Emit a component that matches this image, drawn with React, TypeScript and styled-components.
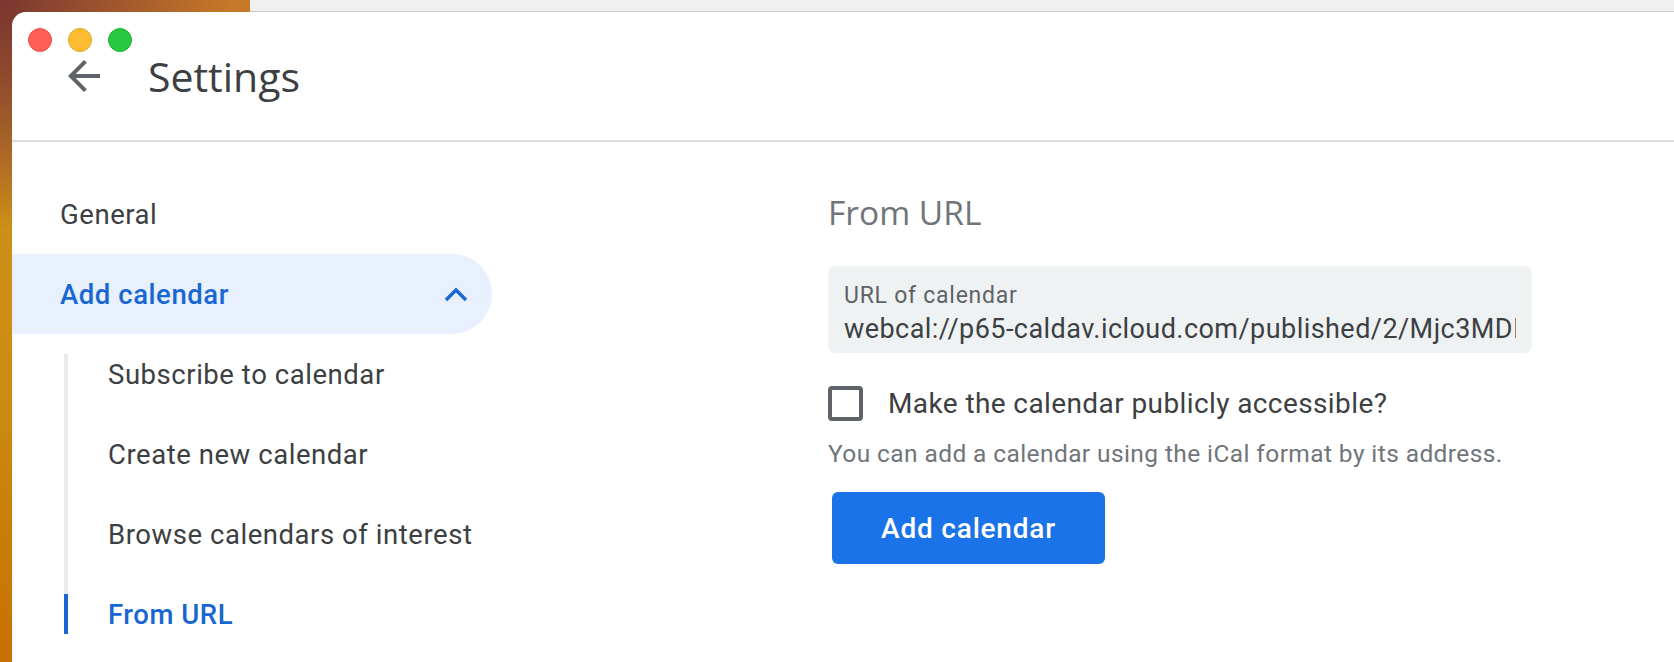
import React from 'react';
import styled, { createGlobalStyle } from 'styled-components';

const GlobalStyle = createGlobalStyle`
  html, body {
    margin: 0;
    padding: 0;
    height: 100%;
    overflow: hidden;
    background: #fff;
  }
  * { box-sizing: border-box; }
`;

const Desktop = styled.div`
  width: 100%;
  height: 662px;
  overflow: hidden;
  display: flex;
  flex-direction: column;
  font-family: Roboto, "Liberation Sans", sans-serif;
  background:
    radial-gradient(circle 230px at 0 0, #7a3631 0%, rgba(122, 54, 49, 0) 100%),
    linear-gradient(90deg, rgba(200, 122, 40, 0.9) 0, rgba(200, 122, 40, 0.9) 250px, transparent 250px) top left / 100% 12px no-repeat,
    linear-gradient(180deg, #b8652a 0, #bf7a22 120px, #cc9018 220px, #cc8c10 400px, #c87a05 560px, #c87000 662px);
`;

const BackWindowEdge = styled.div`
  height: 12px;
  margin-left: 250px;
  flex: none;
  background: #f0f0f0;
  border-bottom: 1px solid #c8c8c8;
`;

const Window = styled.div`
  position: relative;
  flex: 1;
  margin-left: 12px;
  background: #fff;
  border-top-left-radius: 14px;
  display: flex;
  flex-direction: column;
`;

const TrafficLights = styled.div`
  position: absolute;
  top: 16px;
  left: 16px;
  display: flex;
  gap: 16px;
`;

const Light = styled.span<{ $color: string; $edge: string }>`
  width: 24px;
  height: 24px;
  border-radius: 50%;
  background: ${p => p.$color};
  border: 1px solid ${p => p.$edge};
`;

const Header = styled.header`
  height: 130px;
  flex: none;
  display: flex;
  align-items: center;
  padding-left: 48px;
  border-bottom: 2px solid #dadce0;
`;

const BackIcon = styled.svg`
  width: 48px;
  height: 48px;
  fill: #5f6368;
  flex: none;
`;

const Title = styled.h1`
  margin: 0 0 0 40px;
  font-family: "Open Sans", Roboto, sans-serif;
  font-size: 41px;
  font-weight: 400;
  color: #3c4043;
  line-height: 48px;
`;

const Body = styled.div`
  flex: 1;
  display: flex;
`;

const Sidebar = styled.nav`
  width: 480px;
  flex: none;
  padding-top: 32px;
`;

const NavItem = styled.div<{ $active?: boolean }>`
  height: 80px;
  width: 480px;
  padding: 0 24px 0 48px;
  display: flex;
  align-items: center;
  justify-content: space-between;
  font-size: 27.5px;
  letter-spacing: 0.55px;
  font-weight: ${p => (p.$active ? 500 : 400)};
  color: ${p => (p.$active ? '#1967d2' : '#3c4043')};
  background: ${p => (p.$active ? '#e8f0fe' : 'transparent')};
  border-radius: ${p => (p.$active ? '0 40px 40px 0' : '0')};
`;

const ChevronIcon = styled.svg`
  width: 24px;
  height: 16px;
  fill: none;
  stroke: #1967d2;
  stroke-width: 3.5;
`;

const SubList = styled.div`
  margin: 20px 0 0 52px;
  border-left: 4px solid #e8eaed;
  display: flex;
  flex-direction: column;
  gap: 40px;
`;

const SubItem = styled.div<{ $active?: boolean }>`
  height: 40px;
  display: flex;
  align-items: center;
  font-size: 27.5px;
  letter-spacing: 0.55px;
  white-space: nowrap;
  font-weight: ${p => (p.$active ? 500 : 400)};
  color: ${p => (p.$active ? '#1967d2' : '#3c4043')};
  padding-left: 40px;
  margin-left: ${p => (p.$active ? '-4px' : '0')};
  border-left: ${p => (p.$active ? '4px solid #1967d2' : '0')};
`;

const Main = styled.main`
  margin-left: 336px;
  padding-top: 48px;
  width: 704px;
  flex: none;
`;

const Heading = styled.h2`
  margin: 0;
  font-family: "Open Sans", Roboto, sans-serif;
  font-size: 33.5px;
  font-weight: 400;
  line-height: 44px;
  color: #70757a;
`;

const Field = styled.div`
  margin-top: 32px;
  height: 87px;
  background: #eff2f3;
  border-radius: 8px;
  padding: 13px 16px 0 16px;
`;

const FieldLabel = styled.div`
  font-size: 23px;
  line-height: 33px;
  color: #5f6368;
  letter-spacing: 0.75px;
`;

const FieldValue = styled.div`
  font-size: 27px;
  line-height: 34px;
  color: #3c4043;
  letter-spacing: 0.45px;
  white-space: nowrap;
  overflow: hidden;
`;

const CheckRow = styled.label`
  margin-top: 33px;
  display: flex;
  align-items: center;
  gap: 25px;
`;

const CheckBox = styled.span`
  width: 35px;
  height: 35px;
  flex: none;
  border: 4px solid #5f6368;
  border-radius: 4px;
`;

const CheckText = styled.span`
  font-size: 28px;
  letter-spacing: 0.4px;
  color: #3c4043;
`;

const Hint = styled.div`
  margin-top: 18px;
  font-size: 24.5px;
  line-height: 30px;
  letter-spacing: 0.4px;
  color: #70757a;
  white-space: nowrap;
`;

const AddButton = styled.button`
  display: block;
  margin: 23px 0 0 4px;
  width: 273px;
  height: 72px;
  border: 0;
  border-radius: 6px;
  background: #1a73e8;
  color: #fff;
  font-family: Roboto, "Liberation Sans", sans-serif;
  font-size: 28px;
  font-weight: 500;
  letter-spacing: 0.8px;
`;

export default function App() {
  return (
    <>
      <GlobalStyle />
      <Desktop>
        <BackWindowEdge />
        <Window>
          <TrafficLights>
            <Light $color="#ff5f57" $edge="#e5534b" />
            <Light $color="#febc2e" $edge="#e0a028" />
            <Light $color="#28c840" $edge="#22ad36" />
          </TrafficLights>
          <Header>
            <BackIcon viewBox="0 0 24 24">
              <path d="M20 11H7.83l5.59-5.59L12 4l-8 8 8 8 1.41-1.41L7.83 13H20v-2z" />
            </BackIcon>
            <Title>Settings</Title>
          </Header>
          <Body>
            <Sidebar>
              <NavItem>General</NavItem>
              <NavItem $active>
                Add calendar
                <ChevronIcon viewBox="0 0 24 16">
                  <path d="M2 14 L12 4 L22 14" />
                </ChevronIcon>
              </NavItem>
              <SubList>
                <SubItem>Subscribe to calendar</SubItem>
                <SubItem>Create new calendar</SubItem>
                <SubItem>Browse calendars of interest</SubItem>
                <SubItem $active>From URL</SubItem>
              </SubList>
            </Sidebar>
            <Main>
              <Heading>From URL</Heading>
              <Field>
                <FieldLabel>URL of calendar</FieldLabel>
                <FieldValue>webcal://p65-caldav.icloud.com/published/2/Mjc3MDI1NTk4MjI3NzAyNTU</FieldValue>
              </Field>
              <CheckRow>
                <CheckBox />
                <CheckText>Make the calendar publicly accessible?</CheckText>
              </CheckRow>
              <Hint>You can add a calendar using the iCal format by its address.</Hint>
              <AddButton>Add calendar</AddButton>
            </Main>
          </Body>
        </Window>
      </Desktop>
    </>
  );
}
